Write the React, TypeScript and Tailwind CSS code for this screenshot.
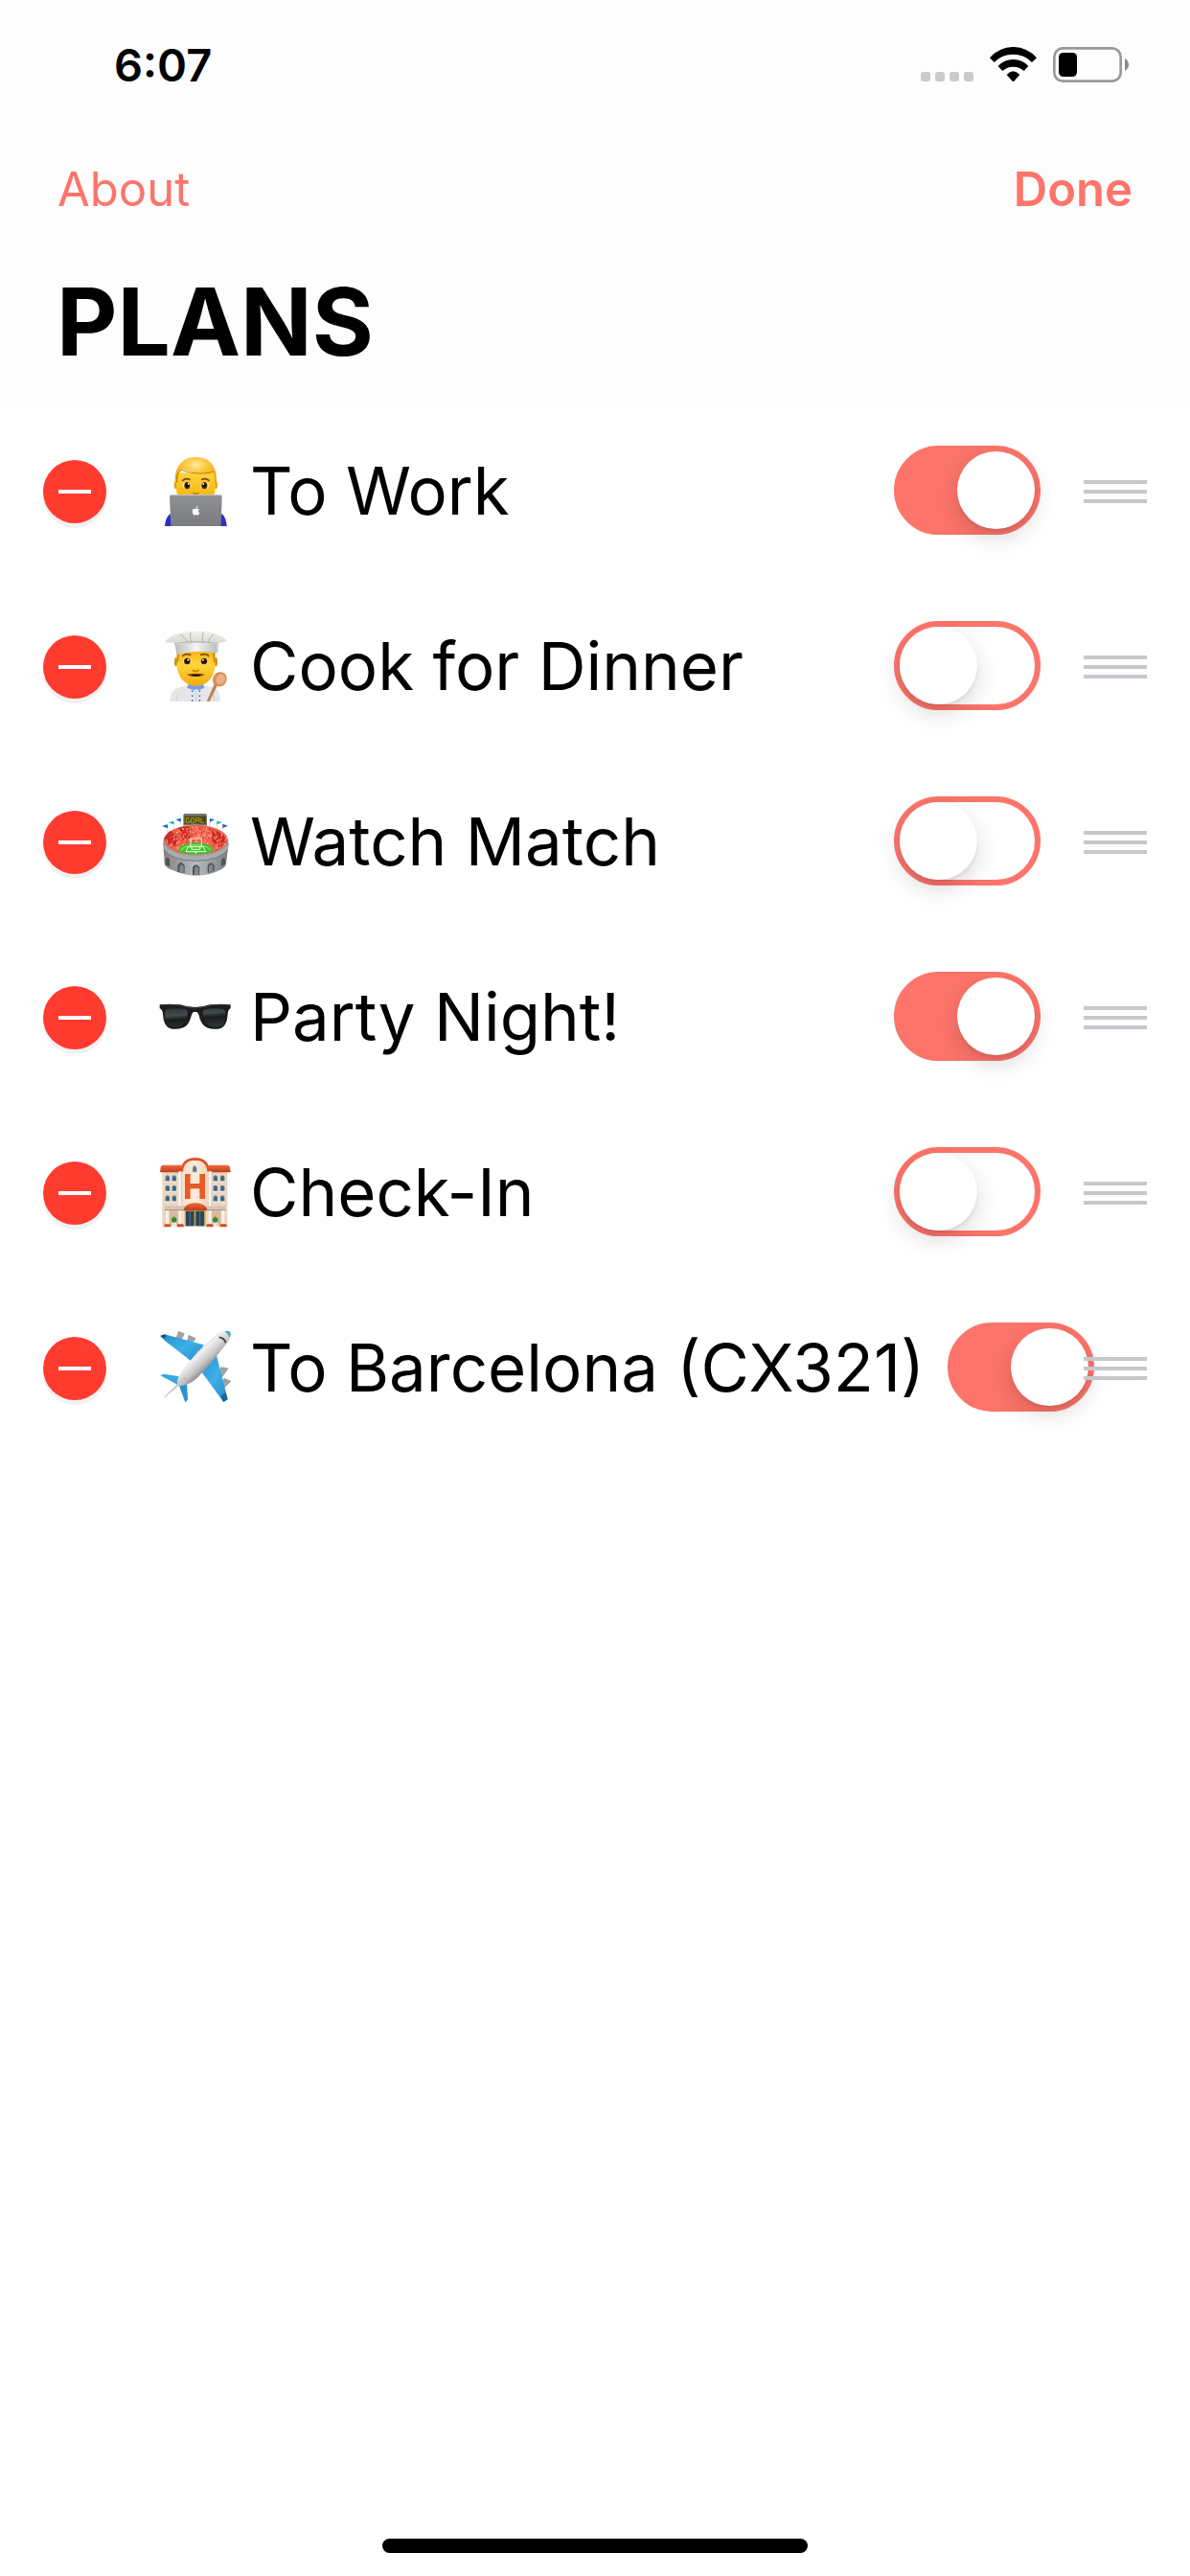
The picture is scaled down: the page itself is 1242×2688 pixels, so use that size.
import { useState } from "react";
import type { ReactNode } from "react";

type Plan = { name: string; icon: string; viewBox: string; art: ReactNode; on: boolean };

const Technologist = (
  <>
    <defs>
      <radialGradient id="tw-hair" cx="0.5" cy="0.3" r="0.6">
        <stop offset="0" stopColor="#ffe9a6" />
        <stop offset="0.45" stopColor="#fdc83c" />
        <stop offset="1" stopColor="#f0a80c" />
      </radialGradient>
      <linearGradient id="tw-face" x1="0" y1="0" x2="0" y2="1">
        <stop offset="0" stopColor="#ffd43a" />
        <stop offset="1" stopColor="#f3b20c" />
      </linearGradient>
      <linearGradient id="tw-lap" x1="0" y1="0" x2="0" y2="1">
        <stop offset="0" stopColor="#8f9093" />
        <stop offset="1" stopColor="#7b7c7f" />
      </linearGradient>
    </defs>
    <path d="M66 267c2-22 9-36 24-41h148c14 5 20 19 22 41z" fill="#2b2fc4" />
    <ellipse cx="100" cy="139" rx="5" ry="12" fill="#e8a30c" />
    <ellipse cx="226" cy="139" rx="5" ry="12" fill="#e8a30c" />
    <path d="M102 100h122v48c0 16-5 26-12 34h-98c-7-8-12-18-12-34z" fill="url(#tw-face)" />
    <path d="M99 132c-4-40 14-81 64-81s68 37 65 81l-6-1c1-14-1-25-4-33-42 9-80-3-98-10-10 8-15 24-15 43z" fill="url(#tw-hair)" />
    <path d="M116 90c24 11 66 17 104 7M105 131c-3-16 2-33 14-41" fill="none" stroke="#a86a10" strokeWidth="2.5" />
    <path d="M122 124q9-9 22-3M182 121q13-6 22 3" fill="none" stroke="#7a4a10" strokeWidth="5" strokeLinecap="round" />
    <g>
      <ellipse cx="135" cy="140" rx="13" ry="10" fill="#fbe3a0" />
      <ellipse cx="191" cy="140" rx="13" ry="10" fill="#fbe3a0" />
      <ellipse cx="136" cy="140" rx="9" ry="11" fill="#4a2806" />
      <ellipse cx="190" cy="140" rx="9" ry="11" fill="#4a2806" />
      <circle cx="137" cy="139" r="6" fill="#0b0500" />
      <circle cx="189" cy="139" r="6" fill="#0b0500" />
      <circle cx="140" cy="135" r="3" fill="#fff" />
      <circle cx="187" cy="135" r="3" fill="#fff" />
    </g>
    <path d="M154 163q9 7 18 0" fill="none" stroke="#b97208" strokeWidth="4" />
    <path d="M87 169h152q6 0 6 6l-3 92H85l-4-92q0-6 6-6z" fill="url(#tw-lap)" />
    <path d="M82 173q1-3 5-3h152q5 0 6 3" fill="none" stroke="#c9cacc" strokeWidth="3" />
    <path d="M163 214c-4-3-10-2-11 6 0 7 4 13 7 13 2 0 2-1 5-1s3 1 5 1c2 0 5-4 6-7-6-3-5-9-1-11-3-4-8-3-11-1zM163 212c0-4 3-7 6-8 0 4-2 7-6 8z" fill="#fff" />
  </>
);

const Cook = (
  <>
    <defs>
      <linearGradient id="ck-hat" x1="0" y1="0" x2="0" y2="1">
        <stop offset="0" stopColor="#f0f0ee" />
        <stop offset="1" stopColor="#c4c4c1" />
      </linearGradient>
      <linearGradient id="ck-band" x1="0" y1="0" x2="1" y2="0">
        <stop offset="0" stopColor="#bcbcba" />
        <stop offset="0.5" stopColor="#f4f4f4" />
        <stop offset="1" stopColor="#c0c0be" />
      </linearGradient>
      <linearGradient id="ck-face" x1="0" y1="0" x2="0" y2="1">
        <stop offset="0" stopColor="#f5b814" />
        <stop offset="0.4" stopColor="#ffd43a" />
        <stop offset="1" stopColor="#f0aa10" />
      </linearGradient>
    </defs>
    <path d="M82 276c1-26 10-40 32-45l29-8h42l29 8c18 5 25 20 26 45z" fill="#e6e6ea" />
    <path d="M102 276l5-24M221 276l-4-22" stroke="#c2c2c8" strokeWidth="2" />
    <path d="M141 221l-6 12 23 8 7-5 7 5 18-8-5-12z" fill="#6fa0e8" />
    <path d="M164 240v36" stroke="#c5c5cb" strokeWidth="2" />
    <g fill="#4a7fdc">
      <circle cx="152" cy="244" r="3" />
      <circle cx="175" cy="244" r="3" />
      <circle cx="152" cy="259" r="3" />
      <circle cx="175" cy="259" r="3" />
      <circle cx="152" cy="273" r="3" />
      <circle cx="175" cy="273" r="3" />
    </g>
    <ellipse cx="101" cy="152" rx="5" ry="14" fill="#d9900e" />
    <ellipse cx="226" cy="152" rx="5" ry="14" fill="#d9900e" />
    <path d="M104 118h119v45c0 35-25 65-59 65s-60-30-60-65z" fill="url(#ck-face)" />
    <path d="M104 123h7l-3 30h-4zM223 123h-7l3 30h4z" fill="#c98814" />
    <path d="M122 133q10-8 24-3M179 130q14-5 24 3" fill="none" stroke="#7a4a10" strokeWidth="5" strokeLinecap="round" />
    <ellipse cx="136" cy="150" rx="13" ry="10" fill="#fbe3a0" />
    <ellipse cx="190" cy="150" rx="13" ry="10" fill="#fbe3a0" />
    <circle cx="136" cy="150" r="10" fill="#4a2806" />
    <circle cx="189" cy="150" r="10" fill="#4a2806" />
    <circle cx="137" cy="150" r="6" fill="#0b0500" />
    <circle cx="188" cy="150" r="6" fill="#0b0500" />
    <circle cx="139" cy="146" r="3" fill="#fff" />
    <circle cx="186" cy="146" r="3" fill="#fff" />
    <path d="M153 178q10 7 19 0" fill="none" stroke="#c07a08" strokeWidth="4" strokeLinecap="round" />
    <path d="M135 191q28-5 56 0-10 7-28 7t-28-7z" fill="#7a3f06" />
    <path d="M148 192q15 9 31 0z" fill="#1e0a00" />
    <path d="M95 92L68 91q-1-6 10-13 8-9 31-14 17-9 53-8 39-2 57 7 20 4 30 12 10 6 10 13l-24 6-3 29q-68-14-129 4z" fill="url(#ck-hat)" />
    <path d="M99 99q64-11 129-2l-1 28q-62-14-123 4z" fill="url(#ck-band)" />
    <path d="M96 95q66-12 133-1M113 67q16 5 25 26M146 60q-2 18 4 32M186 60q-5 18 0 32M219 64q-12 10-17 28" fill="none" stroke="#aaa9a6" strokeWidth="2.5" />
    <path d="M231 225l-25 51h-9l25-56z" fill="#c77f4c" />
    <path d="M218 218c-5-12 0-28 14-33s28 3 28 18-10 26-22 26-17-4-20-11z" fill="#d68f5c" />
    <ellipse cx="241" cy="206" rx="14" ry="17" transform="rotate(28 241 206)" fill="#eab283" />
  </>
);

const crowd = Array.from({ length: 210 }, (_, i) => {
  const angle = (i * 137.5 * Math.PI) / 180;
  const radius = Math.sqrt(((i * 29) % 210) / 210);
  return { x: 163 + Math.cos(angle) * 95 * radius, y: 168 + Math.sin(angle) * 41 * radius, tone: i % 4 };
});
const crowdTones = ["#ffa88c", "#d63a30", "#ff7a5e", "#ffc4aa"];

const Stadium = (
  <>
    <defs>
      <linearGradient id="st-wall" x1="0" y1="0" x2="1" y2="0">
        <stop offset="0" stopColor="#808284" />
        <stop offset="0.5" stopColor="#b9bbbd" />
        <stop offset="1" stopColor="#7a7c7e" />
      </linearGradient>
    </defs>
    <path d="M75 145v-24M94 135v-24M116 128v-24M207 128v-24M229 135v-24M247 145v-24" stroke="#c9d2d8" strokeWidth="2.5" />
    <path d="M75 121l-18 5 18 7zM207 102l16 4-16 7zM247 119l17 6-17 7z" fill="#2169bd" />
    <path d="M94 110l-17 5 17 6zM229 110l17 4-17 7z" fill="#1fb3a8" />
    <path d="M116 101l-16 5 16 7z" fill="#2169bd" />
    <path d="M61 178l4 67q5 11 25 19 35 16 74 18 45-2 74-18 16-7 20-19l8-67z" fill="url(#st-wall)" />
    <ellipse cx="163" cy="173" rx="102" ry="50" fill="#97999b" />
    <ellipse cx="163" cy="169" rx="99" ry="46" fill="#f0604c" />
    <path d="M64 166l18-25 25 12-5 31-16 10zM108 131l32-5 6 36-24 8zM213 135l34 16 12 18-21 25-24-20z" fill="#cc2622" />
    {crowd.map((dot, i) => (
      <rect key={i} x={dot.x} y={dot.y} width="4" height="4" fill={crowdTones[dot.tone]} />
    ))}
    <path d="M107 202q5-21 56-24 51 3 56 24-20 13-56 13t-56-13z" fill="#44bd2f" />
    <path d="M117 203q5-15 46-18 41 3 46 18" fill="none" stroke="#78dc58" strokeWidth="5" />
    <path d="M147 190v-25h34v25M139 191h48l7 15h-62zM151 191l-2 8h28l-2-8M163 206v7" fill="none" stroke="#e9ffe3" strokeWidth="3" />
    <path d="M61 180q24 37 102 38 80-1 103-38l-2 17q-24 37-101 37t-101-37z" fill="#a9abad" />
    <path d="M62 198q23 36 101 37 78-1 101-37" fill="none" stroke="#747678" strokeWidth="3" />
    <g fill="#505356">
      <path d="M68 247v-15q5-14 13-2v23zM106 270v-20q10-20 22 0v23zM153 279v-24q11-17 22 0v24zM200 273v-23q11-19 21 0v17zM243 252v-19q7-15 13-3v15z" />
    </g>
    <g fill="#85888a">
      <path d="M112 271v-18q5-12 13-2v22zM159 279v-21q7-11 13 0v21zM204 271v-18q7-11 13-2v16z" />
    </g>
    <path d="M124 91l4-4h66l4 4v34q-37-6-74 0z" fill="#77736d" />
    <path d="M128 95h66v25q-33-4-66 0z" fill="#48440d" />
    <path d="M144 101h-11v14h11v-7h-5M149 101h9v14h-9zM164 115v-14h10v14M164 109h10M180 100v15h10" fill="none" stroke="#aca32c" strokeWidth="3" />
  </>
);

const Sunglasses = (
  <>
    <defs>
      <linearGradient id="sg-lens" x1="0" y1="0" x2="0.25" y2="1">
        <stop offset="0" stopColor="#2c3334" />
        <stop offset="0.4" stopColor="#434b4c" />
        <stop offset="0.62" stopColor="#181c1d" />
        <stop offset="1" stopColor="#2a3132" />
      </linearGradient>
    </defs>
    <path d="M50 115q27-4 65 0 22 8 46 8t46-8q37-4 65 0v12q-8 3-9 18-2 36-21 44-24 6-44-2-15-7-22-27-4-20-10-22h-10q-5 3-10 22-7 21-22 27-24 8-43 2-19-8-21-44-1-15-10-18z" fill="#1c1c1b" />
    <path d="M52 117q30-4 63 1 23 8 46 8t46-8q33-5 63-1" fill="none" stroke="#4b4a46" strokeWidth="2" />
    <path d="M75 129q23-5 53 0 12 2 9 14-6 35-28 41-18 3-30-1-13-8-13-39 0-13 9-15zM194 129q30-5 53 0 9 2 9 15-1 31-14 39-13 4-30 1-22-6-27-41-2-11 9-14z" fill="url(#sg-lens)" />
  </>
);

const Hotel = (
  <>
    <defs>
      <linearGradient id="ht-roof" x1="0" y1="0" x2="0" y2="1">
        <stop offset="0" stopColor="#f36d3f" />
        <stop offset="1" stopColor="#bd3b19" />
      </linearGradient>
      <linearGradient id="ht-wall" x1="0" y1="0" x2="1" y2="0">
        <stop offset="0" stopColor="#f5dfc8" />
        <stop offset="0.5" stopColor="#fbecd9" />
        <stop offset="1" stopColor="#efd4bb" />
      </linearGradient>
    </defs>
    <path d="M58 80h204v175H58z" fill="#edd4bd" />
    <path d="M53 70q0-8 9-8h57v23H51zM203 62h58q9 0 9 8l2 15h-69z" fill="url(#ht-roof)" />
    <path d="M119 255V82q3-38 42-40 39 2 42 40v173z" fill="url(#ht-wall)" />
    <path d="M119 83q2-39 42-40 40 1 42 40" fill="none" stroke="#df5429" strokeWidth="8" />
    <path d="M109 82h9v118h-9zM204 82h9v118h-9z" fill="#f8f7f5" />
    <path d="M118 82v116M213 82v116" stroke="#cfb8a5" strokeWidth="2" />
    {[68, 89, 218, 240].map((x) =>
      [93, 124, 156].map((y) => (
        <g key={x + "-" + y}>
          <path d={`M${x} ${y + 21}v-15q6-10 13 0v15z`} fill="#477999" />
          <path d={`M${x + 2} ${y + 9}h9M${x + 2} ${y + 14}h9`} stroke="#274d6d" strokeWidth="2" />
          <path d={`M${x - 2} ${y + 21}h17`} stroke="#fffaf0" strokeWidth="3" />
        </g>
      )),
    )}
    <path d="M153 84V71q6-15 13 0v13z" fill="#477999" stroke="#d5bca3" strokeWidth="2" />
    <path d="M129 90h17v30h29V90h17v78h-17v-32h-29v32h-17z" fill="#eb5927" />
    <path d="M66 190h190v11H66z" fill="#d5c6b3" />
    <path d="M66 201h190v4H66z" fill="#aa9885" />
    <path d="M69 205h10v45H69zM109 205h9v45h-9zM203 205h9v45h-9zM243 205h10v45h-10z" fill="#f5f2ec" />
    <path d="M80 205h28v45H80zM213 205h29v45h-29z" fill="#dcb999" />
    <path d="M128 203h66v50h-66z" fill="#c3a65d" />
    <path d="M132 206h26v47h-26zM163 206h26v47h-26z" fill="#2c4655" />
    <path d="M145 206v47M176 206v47" stroke="#547283" strokeWidth="3" />
    <path d="M125 204q3-22 36-24 34 2 38 24z" fill="url(#ht-roof)" />
    <path d="M88 240h14l-2 15H90zM217 240h14l-2 15h-10z" fill="#eeeae5" />
    <circle cx="95" cy="234" r="8" fill="#277e2c" />
    <circle cx="224" cy="234" r="8" fill="#277e2c" />
    <path d="M87 240l8-19 8 19zM216 240l8-19 8 19z" fill="#318e34" />
    <path d="M63 256l3-9h17l2 9zM104 256l2-9h18l2 9zM196 256l2-9h18l2 9zM238 256l2-9h18l3 9z" fill="#cf4d24" />
  </>
);

const Airplane = (
  <>
    <defs>
      <linearGradient id="ap-body" x1="0.3" y1="0.3" x2="0.62" y2="0.65">
        <stop offset="0" stopColor="#c3c3c3" />
        <stop offset="0.35" stopColor="#f0f0f0" />
        <stop offset="0.7" stopColor="#c6c6c6" />
        <stop offset="1" stopColor="#888" />
      </linearGradient>
      <linearGradient id="ap-wing" x1="0" y1="0" x2="1" y2="1">
        <stop offset="0" stopColor="#2a8ecb" />
        <stop offset="0.5" stopColor="#3cb0e8" />
        <stop offset="1" stopColor="#2588c5" />
      </linearGradient>
    </defs>
    <g fill="#a3a3a3" stroke="#787878" strokeWidth="1.5">
      <path d="M101 67l8-24 18 7-11 22zM136 77l5-22 21 10-13 18zM235 176l7-21 22 4-19 27zM245 212l6-22 22 9-21 19z" />
    </g>
    <path d="M52 57l13-5 123 33-30 60-22-19-70-54z" fill="url(#ap-wing)" />
    <path d="M52 57l13-5 7 5-9 9z" fill="#15567f" />
    <path d="M178 166l50-48 35 137-13 9z" fill="url(#ap-wing)" />
    <path d="M250 264l-9-17 15-14 7 22z" fill="#186697" />
    <path d="M52 181l11-5 62 10-17 25z" fill="#37a7df" />
    <path d="M111 213l24-8 3 52-8 8z" fill="#2993cf" />
    <path d="M105 209q-2-19 17-47l49-57 53-49q22-20 44-13 11 14-9 39l-50 61-42 46q-26 24-58 25z" fill="url(#ap-body)" />
    <path d="M254 43q12-4 17 3 3 7-2 16-5-12-15-19z" fill="#43a8de" />
    <path d="M236 61q17 2 21 18" fill="none" stroke="#3a3a3a" strokeWidth="5" />
    <path d="M66 248l57-57q6-4 8-2-2 7-10 13z" fill="#d5d5d5" stroke="#9b9b9b" strokeWidth="1.5" />
  </>
);

const initialPlans: Plan[] = [
  { name: "To Work", icon: "Technologist", viewBox: "36 36 243 246", art: Technologist, on: true },
  { name: "Cook for Dinner", icon: "Cook", viewBox: "36 45 243 246", art: Cook, on: false },
  { name: "Watch Match", icon: "Stadium", viewBox: "36 54 243 246", art: Stadium, on: false },
  { name: "Party Night!", icon: "Sunglasses", viewBox: "36 33 243 246", art: Sunglasses, on: true },
  { name: "Check-In", icon: "Hotel", viewBox: "36 27 243 246", art: Hotel, on: false },
  { name: "To Barcelona (CX321)", icon: "Airplane", viewBox: "36 36 243 246", art: Airplane, on: true },
];

function StatusBar() {
  return (
    <div className="flex h-[135px] items-center justify-between pr-[64px] pl-[119px]">
      <time className="text-[47px] leading-[60px] font-semibold">6:07</time>
      <div className="flex items-end">
        <div className="mr-[17px] flex gap-[5px] pb-px">
          <span className="size-[10px] rounded-[3px] bg-[#cacaca]" />
          <span className="size-[10px] rounded-[3px] bg-[#cacaca]" />
          <span className="size-[10px] rounded-[3px] bg-[#cacaca]" />
          <span className="size-[10px] rounded-[3px] bg-[#cacaca]" />
        </div>
        <svg className="mr-[17px] h-[37px] w-[49px]" viewBox="396 87 147 111" role="img" aria-label="Wi-Fi">
          <path d="M396 121a96.4 96.4 0 0 1 147 0l-15 14a82 82 0 0 0-118 0z" />
          <path d="M422 147a64 64 0 0 1 95 0l-14 15a50 50 0 0 0-67 0z" />
          <path d="M449 174q20-22 41 0l-18 20q-2.500 2-5 0z" />
        </svg>
        <svg className="h-[37px] w-[79px]" viewBox="594 87 237 111" role="img" aria-label="Battery">
          <rect x="598" y="91" width="208" height="103" rx="27" fill="none" stroke="#999" strokeWidth="8" />
          <rect x="612" y="105" width="57" height="75" rx="14" />
          <path d="M819 123q12 7 12 19.500t-12 19.500z" fill="#8a8a8a" />
        </svg>
      </div>
    </div>
  );
}

function PlanRow({ plan, onToggle, onRemove }: { plan: Plan; onToggle: () => void; onRemove: () => void }) {
  return (
    <li className="flex h-[183px] items-start px-[45px] pt-[45px]">
      <div className="flex h-24 shrink-0 items-center">
        <button
          type="button"
          aria-label={`Delete ${plan.name}`}
          onClick={onRemove}
          className="flex size-[66px] items-center justify-center rounded-full bg-[#ff3b30] shadow-[0_5px_0_#f1f1f1]"
        >
          <span className="h-1 w-[34px] bg-white" />
        </button>
      </div>
      <label className="ml-[51px] flex min-w-0 flex-1 items-start justify-between gap-6">
        <span className="flex h-24 shrink-0 items-center gap-[18px] text-[69px] whitespace-nowrap">
          <svg className="h-[82px] w-[81px] shrink-0" viewBox={plan.viewBox} role="img" aria-label={plan.icon}>
            {plan.art}
          </svg>
          {plan.name}
        </span>
        <input
          type="checkbox"
          role="switch"
          checked={plan.on}
          onChange={onToggle}
          className="h-[93px] w-[153px] shrink-0 appearance-none rounded-full border-6 border-[#fd746a] bg-white before:block before:size-[81px] before:rounded-full before:bg-white before:shadow-[0_9px_24px_rgba(0,0,0,0.15),0_3px_3px_rgba(0,0,0,0.06)] checked:bg-[#fd746a] checked:before:translate-x-[60px]"
        />
      </label>
      <div className="z-10 ml-[45px] flex h-24 shrink-0 items-center">
        <button type="button" aria-label={`Reorder ${plan.name}`} className="flex w-[66px] flex-col gap-[6px]">
          <span className="h-1 bg-[#c7c7cc]" />
          <span className="h-1 bg-[#c7c7cc]" />
          <span className="h-1 bg-[#c7c7cc]" />
        </button>
      </div>
    </li>
  );
}

export default function App() {
  const [plans, setPlans] = useState(initialPlans);
  const toggle = (name: string) =>
    setPlans((list) => list.map((p) => (p.name === name ? { ...p, on: !p.on } : p)));
  const remove = (name: string) => setPlans((list) => list.filter((p) => p.name !== name));

  return (
    <div className="flex min-h-screen flex-col overflow-x-hidden bg-white font-[Inter,sans-serif] text-black">
      <header className="h-[420px] bg-[#fdfdfd]">
        <StatusBar />
        <nav className="flex h-[126px] items-center justify-between px-[60px] text-[49px] text-[#fd746a]">
          <a href="#about">About</a>
          <button type="button" className="font-semibold">
            Done
          </button>
        </nav>
        <h1 className="px-[59px] text-[98px] leading-[150px] font-bold">PLANS</h1>
      </header>
      <main className="flex-1">
        <ul>
          {plans.map((plan) => (
            <PlanRow
              key={plan.name}
              plan={plan}
              onToggle={() => toggle(plan.name)}
              onRemove={() => remove(plan.name)}
            />
          ))}
        </ul>
      </main>
      <footer className="flex justify-center pb-6">
        <div className="h-[15px] w-[444px] rounded-full bg-black" />
      </footer>
    </div>
  );
}
